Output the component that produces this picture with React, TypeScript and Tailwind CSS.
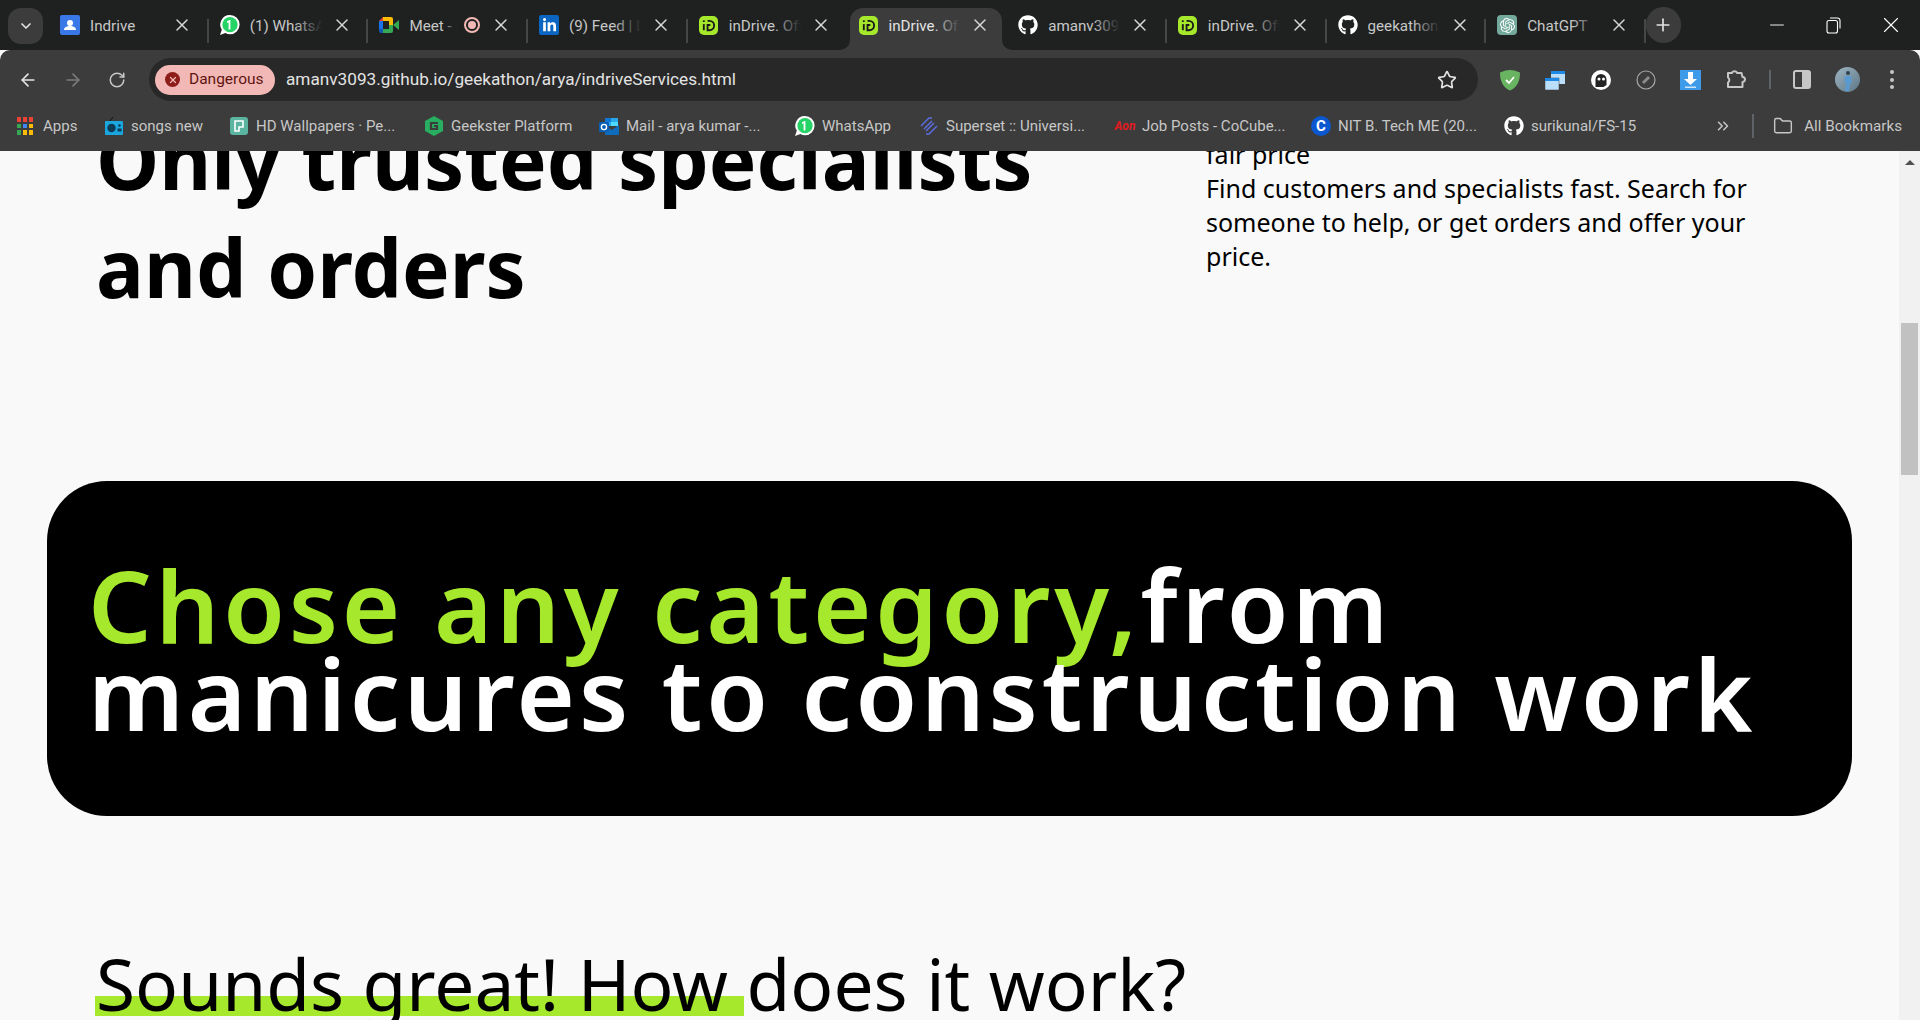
import { ArrowLeft, ArrowRight, ChevronDown, ChevronsRight, Folder, Minus, Plus, RotateCw, Star, X } from "lucide-react";
import type { ReactNode } from "react";
import { FaGithub, FaLinkedinIn } from "react-icons/fa";
import { SiOpenai } from "react-icons/si";

const uiFont = "font-['Roboto','Noto_Sans',sans-serif]";

function IndriveIcon() {
  return (
    <div className="w-[19px] h-[19px] rounded-[5px] bg-[#a6e82c] flex items-center justify-center">
      <svg width="15" height="15" viewBox="0 0 16 16" fill="none" stroke="#1a1a1a" strokeWidth="2">
        <path d="M3 6.5v6.5" />
        <path d="M3 2.5v1.8" />
        <path d="M7 3h2a5 5 0 0 1 0 10H7V7.5h3" />
      </svg>
    </div>
  );
}

function GithubIcon() {
  return <FaGithub size={20} color="#ffffff" />;
}

function WhatsappIcon() {
  return (
    <svg width="20" height="20" viewBox="0 0 20 20">
      <path d="M10 0a9.6 9.6 0 0 1 0 19.2c-1.700 0-3.200-.4-4.600-1.200L0 20l1.800-5.200A9.600 9.600 0 0 1 10 0z" fill="#ffffff" />
      <circle cx="10" cy="9.700" r="7.600" fill="#25d366" />
      <path d="M10.400 5v9.500H8.600V7.300L7 8V6.300L9.800 5z" fill="#ffffff" />
    </svg>
  );
}

function ContactsIcon() {
  return (
    <svg width="20" height="20" viewBox="0 0 20 20">
      <rect width="20" height="20" rx="2" fill="#3b78e7" />
      <circle cx="10" cy="8" r="3" fill="#fff" />
      <path d="M4 15c0-3 3-4 6-4s6 1 6 4z" fill="#fff" />
    </svg>
  );
}

function MeetIcon() {
  return (
    <svg width="20" height="18" viewBox="0 0 20 18">
      <path d="M0 5l4-4v4z" fill="#ea4335" />
      <path d="M0 5h4v8H0z" fill="#1a73e8" />
      <path d="M0 13h4v4H2a2 2 0 0 1-2-2z" fill="#1557b0" />
      <path d="M4 1h8a2 2 0 0 1 2 2v6h-4V5H4z" fill="#fbbc04" />
      <path d="M4 13h6V9h4v6a2 2 0 0 1-2 2H4z" fill="#34a853" />
      <path d="M14 9l6-5v10z" fill="#34a853" />
    </svg>
  );
}

const tabs: { icon: ReactNode; title: string; active?: boolean; dot?: boolean }[] = [
  { icon: <ContactsIcon />, title: "Indrive" },
  { icon: <WhatsappIcon />, title: "(1) WhatsApp" },
  { icon: <MeetIcon />, title: "Meet - abc", dot: true },
  {
    icon: (
      <div className="w-5 h-5 rounded-[2px] bg-[#0a66c2] flex items-center justify-center">
        <FaLinkedinIn size={15} color="#ffffff" />
      </div>
    ),
    title: "(9) Feed | LinkedIn",
  },
  { icon: <IndriveIcon />, title: "inDrive. Offers" },
  { icon: <IndriveIcon />, title: "inDrive. Offers", active: true },
  { icon: <GithubIcon />, title: "amanv3093/geek" },
  { icon: <IndriveIcon />, title: "inDrive. Offers" },
  { icon: <GithubIcon />, title: "geekathon/arya" },
  {
    icon: (
      <div className="w-5 h-5 rounded-[4px] bg-[#74aa9c] flex items-center justify-center">
        <SiOpenai size={15} color="#ffffff" />
      </div>
    ),
    title: "ChatGPT",
  },
];

function Tab({ icon, title, active, dot, noSep }: { icon: ReactNode; title: string; active?: boolean; dot?: boolean; noSep?: boolean }) {
  return (
    <div className="relative w-[159.7px] h-full flex items-center pl-3 shrink-0">
      {active && (
        <>
          <div className="absolute left-[4px] right-[4px] top-[8px] bottom-0 bg-[#3c3c3c] rounded-t-[13px]" />
          <svg className="absolute left-[-6px] bottom-0" width="10" height="10" viewBox="0 0 10 10">
            <path d="M10 0v10H0a10 10 0 0 0 10-10z" fill="#3c3c3c" />
          </svg>
          <svg className="absolute right-[-6px] bottom-0" width="10" height="10" viewBox="0 0 10 10">
            <path d="M0 0v10h10A10 10 0 0 1 0 0z" fill="#3c3c3c" />
          </svg>
        </>
      )}
      <div className="relative shrink-0 w-5 h-5 flex items-center justify-center">{icon}</div>
      <div
        className={`relative ml-[10px] mt-[2px] ${dot ? "w-[48px]" : "w-[72px]"} overflow-hidden whitespace-nowrap text-[15.2px] ${
          active ? "text-[#e3e3e3]" : "text-[#c7c7c7]"
        }`}
      >
        {title}
        <div
          className={`absolute right-0 top-0 bottom-0 ${dot ? "w-[14px]" : "w-7"} bg-gradient-to-r from-transparent ${
            active ? "to-[#3c3c3c]" : "to-[#1f2121]"
          }`}
        />
      </div>
      {dot && (
        <div className="absolute left-[97px] w-[16px] h-[16px] rounded-full border-2 border-[#f2b8b5] flex items-center justify-center">
          <div className="w-2 h-2 rounded-full bg-[#f2b8b5]" />
        </div>
      )}
      <X size={20} strokeWidth={1.7} color="#d8d8d8" className="absolute left-[124px]" />
      {!noSep && <div className="absolute right-[-1px] top-[19px] h-[24px] w-[2px] bg-[#444746]" />}
    </div>
  );
}

function Bookmark({ icon, label, w }: { icon: ReactNode; label: string; w: string }) {
  return (
    <div className="flex items-center gap-[7px] shrink-0">
      <div className="w-5 h-5 flex items-center justify-center shrink-0">{icon}</div>
      <span className={`${w} whitespace-nowrap text-[15px] text-[#c7c7c7]`}>{label}</span>
    </div>
  );
}

function AppsGrid() {
  const colors = ["#ea4335", "#ea4335", "#ea4335", "#34a853", "#4285f4", "#fbbc04", "#34a853", "#fbbc04", "#fbbc04"];
  return (
    <div className="grid grid-cols-3 gap-[2px] w-4 h-[18px]">
      {colors.map((c, i) => (
        <div key={i} style={{ background: c }} />
      ))}
    </div>
  );
}

function RadioIcon() {
  return (
    <svg width="20" height="20" viewBox="0 0 20 20">
      <path d="M5 6l4-5" stroke="#1a1a1a" strokeWidth="1.200" />
      <rect x="1" y="5" width="18" height="14" rx="1" fill="#1aa7e0" />
      <circle cx="7.500" cy="12" r="4.200" fill="#0d3b55" />
      <circle cx="15.500" cy="9.500" r="1.300" fill="#0d3b55" />
      <rect x="13.500" y="12.500" width="4" height="3" fill="#0d3b55" />
    </svg>
  );
}

function OutlookIcon() {
  return (
    <svg width="20" height="18" viewBox="0 0 20 18">
      <path d="M6 1h13v8H6z" fill="#28a8ea" />
      <path d="M6 1h6v4H6z" fill="#0f78d4" />
      <path d="M12 5h7v4h-7z" fill="#50d9ff" />
      <path d="M6 9l7 4 7-5v9a1 1 0 0 1-1 1H7a1 1 0 0 1-1-1z" fill="#0f6cbd" />
      <rect x="0" y="5" width="10" height="10" rx="1" fill="#0a5fb4" />
      <circle cx="5" cy="10" r="2.600" fill="none" stroke="#ffffff" strokeWidth="1.400" />
    </svg>
  );
}

export default function App() {
  return (
    <div className={`h-[1020px] w-[1920px] overflow-hidden flex flex-col bg-[#f9f9f9] ${uiFont}`}>
      {/* tab strip */}
      <div className="h-[50px] bg-[#1f2121] flex items-stretch relative shrink-0">
        <div className="w-12 flex items-center justify-center shrink-0">
          <div className="w-[35px] h-[36px] rounded-[13px] bg-[#3c3c3c] flex items-center justify-center ml-[3px] mt-[1px]">
            <ChevronDown size={16} strokeWidth={2.5} color="#e3e3e3" />
          </div>
        </div>
        {tabs.map((t, i) => (
          <Tab key={i} {...t} noSep={i === 4 || i === 5} />
        ))}
        <div className="w-[35px] h-[36px] self-center rounded-full bg-[#3c3c3c] flex items-center justify-center ml-[1px]">
          <Plus size={20} color="#e3e3e3" />
        </div>
        <div className="absolute right-0 top-0 h-full flex items-center pr-[16px] gap-[37.5px]">
          <Minus size={22} strokeWidth={1} color="#ffffff" />
          <svg width="15" height="17" viewBox="0 0 15 17" fill="none" stroke="#ffffff" strokeWidth="1.100">
            <rect x="1" y="3.500" width="10.500" height="12.500" rx="2" />
            <path d="M4 1h7.500a2.500 2.500 0 0 1 2.500 2.500v8" />
          </svg>
          <X size={26} strokeWidth={1} color="#ffffff" />
        </div>
      </div>

      {/* toolbar */}
      <div className="h-[51px] bg-[#3c3c3c] rounded-t-[10px] flex items-end shrink-0 pl-[18px] pr-[20px]">
        <div className="h-[43px] flex items-center gap-[25px]">
          <ArrowLeft size={20} color="#e3e3e3" />
          <ArrowRight size={20} color="#7b7b7b" />
          <RotateCw size={18} color="#c7c7c7" />
        </div>
        <div className="ml-[23px] w-[1329px] h-[43px] rounded-full bg-[#282828] flex items-center pl-[6px] pr-[21px]">
          <div className="w-[120px] h-[30px] rounded-full bg-[#f2b8b5] flex items-center pl-[10px] gap-[9px] text-[15.5px] text-[#601410]">
            <div className="w-[15px] h-[15px] rounded-full bg-[#8c1d18] flex items-center justify-center">
              <X size={10} strokeWidth={3} color="#f2b8b5" />
            </div>
            Dangerous
          </div>
          <span className="ml-[11px] text-[17.2px] text-[#e3e3e3] whitespace-nowrap">amanv3093.github.io/geekathon/arya/indriveServices.html</span>
          <Star size={20} color="#e3e3e3" className="ml-auto" />
        </div>
        <div className="h-[43px] flex items-center relative flex-1">
          <svg className="absolute left-[22px]" width="20" height="22" viewBox="0 0 20 22">
            <path d="M10 1c3 0 6 .8 10 2.500 0 9-3 15-10 18C3 18.500 0 12.500 0 3.500 4 1.800 7 1 10 1z" fill="#68b461" />
            <path d="M6 11l3 3 5-6" fill="none" stroke="#fff" strokeWidth="1.800" />
          </svg>
          <svg className="absolute left-[67px]" width="20" height="20" viewBox="0 0 20 20">
            <rect x="6" y="1" width="14" height="13" fill="#bbdefb" />
            <rect x="6" y="1" width="14" height="3" fill="#1e88e5" />
            <rect x="0" y="8" width="14" height="12" fill="#bbdefb" stroke="#3c3c3c" strokeWidth=".5" />
            <rect x="0" y="8" width="14" height="3" fill="#1e88e5" />
          </svg>
          <svg className="absolute left-[113px]" width="20" height="20" viewBox="0 0 20 20">
            <circle cx="10" cy="10" r="10" fill="#ffffff" />
            <path d="M4.500 17V9.500a5.500 5.500 0 0 1 11 0V15l-3 2z" fill="#232323" />
            <circle cx="8" cy="9" r="1.500" fill="#ffffff" />
            <circle cx="12.500" cy="9" r="1.500" fill="#ffffff" />
          </svg>
          <svg className="absolute left-[158px]" width="20" height="20" viewBox="0 0 20 20">
            <circle cx="10" cy="10" r="9" fill="none" stroke="#a8a8a8" strokeWidth="1.200" />
            <path d="M6 12l6-6 2 2-6 6z" fill="#8c8c8c" />
          </svg>
          <svg className="absolute left-[202px]" width="21" height="20" viewBox="0 0 21 20">
            <rect width="21" height="20" fill="#3d9be9" />
            <path d="M8 2h5v7h4l-6.500 6L4 9h4z" fill="#fff" />
            <path d="M5 16.500h11V18H5z" fill="#cfe6fa" />
          </svg>
          <svg className="absolute left-[247px]" width="22" height="21" viewBox="0 0 22 21" fill="none" stroke="#c7c7c7" strokeWidth="2" strokeLinejoin="round">
            <path d="M7 3.500a3 3 0 0 1 5 0V4h4.500l1 4a2.500 2.500 0 0 1 0 5V18H3v-4.500a3 3 0 0 0 0-5V4h4z" />
          </svg>
          <div className="absolute left-[291px] h-[19px] w-[2px] bg-[#5f6368]" />
          <svg className="absolute left-[315px]" width="18" height="19" viewBox="0 0 18 19">
            <rect x="1" y="1" width="16" height="17" rx="2" fill="none" stroke="#c7c7c7" strokeWidth="2" />
            <rect x="9" y="1" width="8" height="17" fill="#c7c7c7" />
          </svg>
          <svg className="absolute left-[357px]" width="25" height="25" viewBox="0 0 25 25">
            <defs>
              <linearGradient id="avatarBg" x1="0" y1="0" x2="1" y2="1">
                <stop offset="0" stopColor="#9fb6c4" />
                <stop offset="1" stopColor="#5c7685" />
              </linearGradient>
            </defs>
            <circle cx="12.500" cy="12.500" r="12.500" fill="url(#avatarBg)" />
            <circle cx="13" cy="6" r="2" fill="#2f4251" />
            <path d="M10 9h6l1 7h-2l-1 8h-4l1-8-2-2z" fill="#5b9ad1" />
          </svg>
          <div className="absolute left-[412px] flex flex-col gap-[3.5px]">
            <div className="w-1 h-1 rounded-full bg-[#c7c7c7]" />
            <div className="w-1 h-1 rounded-full bg-[#c7c7c7]" />
            <div className="w-1 h-1 rounded-full bg-[#c7c7c7]" />
          </div>
        </div>
      </div>

      {/* bookmarks bar */}
      <div className="h-[50px] bg-[#3c3c3c] flex items-center shrink-0 pl-[17px] pr-[18px] gap-[26px]">
        <div className="flex items-center gap-[10px] shrink-0">
          <AppsGrid />
          <span className="w-[35px] text-[15px] text-[#c7c7c7]">Apps</span>
        </div>
        <Bookmark label="songs new" w="w-[72px]" icon={<RadioIcon />} />
        <Bookmark
          label="HD Wallpapers · Pe..."
          w="w-[142px]"
          icon={
            <svg width="18" height="18" viewBox="0 0 18 18">
              <rect width="18" height="18" rx="3" fill="#5bb4a0" />
              <path d="M5 4h8v6H9v4H5z" fill="none" stroke="#fff" strokeWidth="1.600" />
            </svg>
          }
        />
        <Bookmark
          label="Geekster Platform"
          w="w-[122px]"
          icon={
            <svg width="18" height="20" viewBox="0 0 18 20">
              <path d="M9 0l9 5v10l-9 5-9-5V5z" fill="#27ae60" />
              <path d="M13 7H6v6h6v-3H9" fill="none" stroke="#3c3c3c" strokeWidth="2.200" />
            </svg>
          }
        />
        <Bookmark label="Mail - arya kumar -..." w="w-[143px]" icon={<OutlookIcon />} />
        <Bookmark label="WhatsApp" w="w-[71px]" icon={<WhatsappIcon />} />
        <Bookmark
          label="Superset :: Universi..."
          w="w-[143px]"
          icon={
            <svg width="18" height="18" viewBox="0 0 18 18" fill="none" stroke="#5b6ee1" strokeWidth="1.500">
              <path d="M1 9l8-8h3M4 12l8-8M6 14l8-8M6 17h3l8-8" />
            </svg>
          }
        />
        <Bookmark label="Job Posts - CoCube..." w="w-[143px]" icon={<span className="text-[#e11b22] text-[12px] font-bold italic">Aon</span>} />
        <Bookmark
          label="NIT B. Tech ME (20..."
          w="w-[140px]"
          icon={<div className="w-5 h-5 rounded-full bg-[#0b57d0] flex items-center justify-center text-white text-[15px] font-bold">C</div>}
        />
        <Bookmark label="surikunal/FS-15" w="w-[104px]" icon={<GithubIcon />} />
        <div className="ml-auto flex items-center">
          <ChevronsRight size={18} color="#c7c7c7" />
          <div className="ml-[20px] w-[2px] h-[24px] bg-[#5f6368]" />
          <Folder size={20} color="#c7c7c7" strokeWidth={1.7} className="ml-[19px]" />
          <span className="ml-[11px] text-[15.2px] text-[#c7c7c7] whitespace-nowrap">All Bookmarks</span>
        </div>
      </div>

      {/* page */}
      <div className="flex-1 min-h-0 flex overflow-hidden">
        <div className="flex-1 min-w-0 font-['Noto_Sans',sans-serif] text-black">
          <div className="-mt-[46px] flex items-start">
            <h1 className="ml-[96px] w-[1110px] text-[80px] leading-[108px] font-bold">
              Only trusted specialists
              <br />
              and orders
            </h1>
            <p className="mt-[32px] w-[560px] text-[25px] leading-[34px]">
              fair price
              <br />
              Find customers and specialists fast. Search for someone to help, or get orders and offer your price.
            </p>
          </div>
          <div className="mt-[160px] ml-[47px] w-[1805px] h-[335px] rounded-[60px] bg-black flex items-center pl-[41px]">
            <h2 className="text-[100px] leading-[88px] font-semibold tracking-[3.8px] text-white whitespace-nowrap -mt-[2px]">
              <span className="text-[#a6e82c]">Chose any category,</span>from
              <br />
              manicures to construction work
            </h2>
          </div>
          <div className="mt-[119px] ml-[96px] text-[71.2px] leading-[98px] whitespace-nowrap">
            <span className="relative z-0 inline-block">
              Sounds great! How&nbsp;
              <span className="absolute -z-10 left-[-1px] right-[3px] top-[61px] h-5 bg-[#a6e82c]" />
            </span>
            does it work?
          </div>
        </div>
        {/* scrollbar */}
        <div className="w-[21px] h-full bg-[#f1f1f1] shrink-0 flex flex-col items-center">
          <div className="mt-[9px] w-0 h-0 border-l-[5px] border-r-[5px] border-b-[5px] border-l-transparent border-r-transparent border-b-[#505050]" />
          <div className="mt-[158px] w-[17px] h-[152px] bg-[#c1c1c1]" />
        </div>
      </div>
    </div>
  );
}
